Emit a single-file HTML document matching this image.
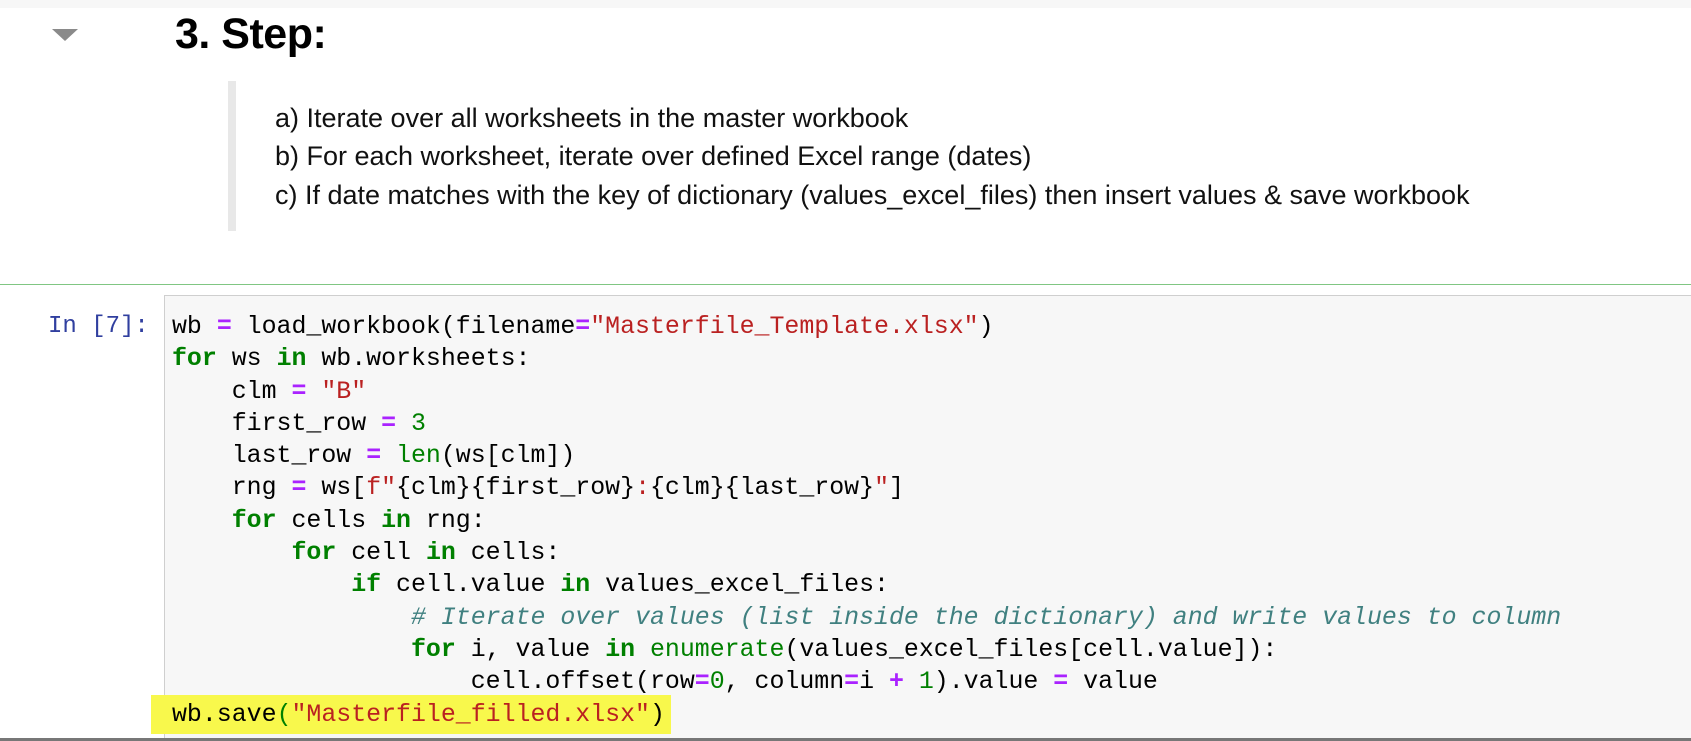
<!DOCTYPE html>
<html><head><meta charset="utf-8"><style>
html,body{margin:0;padding:0;width:1691px;height:741px;overflow:hidden;background:#fff;position:relative;font-family:"Liberation Sans",Arial,sans-serif}
.top{position:absolute;left:0;top:0;width:1691px;height:8px;background:#f7f7f7}
.tri{position:absolute;left:52px;top:29px;width:0;height:0;border-left:13px solid transparent;border-right:13px solid transparent;border-top:12px solid #8a8a8a}
h1{position:absolute;left:175px;top:10px;margin:0;font-size:43px;font-weight:bold;color:#000;letter-spacing:-0.5px}
.bar{position:absolute;left:228px;top:81px;width:8px;height:150px;background:#e8e8e8}
.ln{position:absolute;left:275px;font-size:27px;color:#111;white-space:nowrap;line-height:30px}
.green{position:absolute;left:0;top:284px;width:1691px;height:1px;background:#80c683}
.code{position:absolute;left:164px;top:295px;width:1540px;height:445px;background:#f7f7f7;border:1px solid #cfcfcf;border-right:none}
.prompt{position:absolute;left:48px;top:311px;font-family:"Liberation Mono",monospace;font-size:24px;color:#303f9f;line-height:32px;white-space:pre}
.hl{position:absolute;left:151px;top:695px;width:520px;height:39px;background:#f8f84c}
pre{position:absolute;left:172px;top:311px;margin:0;font-family:"Liberation Mono",monospace;font-size:24.9px;line-height:32.3px;color:#000}
.k{color:#008000;font-weight:bold}.o{color:#aa22ff;font-weight:bold}.s{color:#ba2121}.b{color:#008000}.n{color:#008000}.c{color:#408080;font-style:italic}
.bot{position:absolute;left:0;top:738px;width:1691px;height:3px;background:#777}
</style></head><body>
<div class="top"></div>
<div class="tri"></div>
<h1>3. Step:</h1>
<div class="bar"></div>
<div class="ln" style="top:103px">a) Iterate over all worksheets in the master workbook</div>
<div class="ln" style="top:141px">b) For each worksheet, iterate over defined Excel range (dates)</div>
<div class="ln" style="top:180px">c) If date matches with the key of dictionary (values_excel_files) then insert values &amp; save workbook</div>
<div class="green"></div>
<div class="code"></div>
<div class="hl"></div>
<div class="prompt">In [7]:</div>
<pre>wb <span class="o">=</span> load_workbook(filename<span class="o">=</span><span class="s">"Masterfile_Template.xlsx"</span>)
<span class="k">for</span> ws <span class="k">in</span> wb.worksheets:
    clm <span class="o">=</span> <span class="s">"B"</span>
    first_row <span class="o">=</span> <span class="n">3</span>
    last_row <span class="o">=</span> <span class="b">len</span>(ws[clm])
    rng <span class="o">=</span> ws[<span class="s">f"</span>{clm}{first_row}<span class="s">:</span>{clm}{last_row}<span class="s">"</span>]
    <span class="k">for</span> cells <span class="k">in</span> rng:
        <span class="k">for</span> cell <span class="k">in</span> cells:
            <span class="k">if</span> cell.value <span class="k">in</span> values_excel_files:
                <span class="c"># Iterate over values (list inside the dictionary) and write values to column</span>
                <span class="k">for</span> i, value <span class="k">in</span> <span class="b">enumerate</span>(values_excel_files[cell.value]):
                    cell.offset(row<span class="o">=</span><span class="n">0</span>, column<span class="o">=</span>i <span class="o">+</span> <span class="n">1</span>).value <span class="o">=</span> value
wb.save<span class="b">(</span><span class="s">"Masterfile_filled.xlsx"</span>)</pre>
<div class="bot"></div>
</body></html>
